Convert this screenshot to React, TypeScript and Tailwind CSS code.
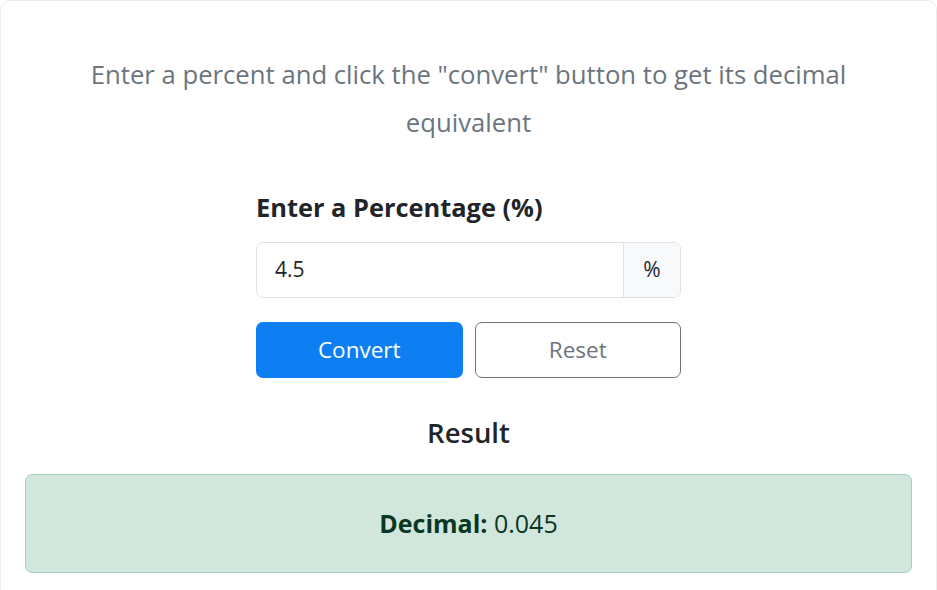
import React from "react";

export default function App() {
  return (
    <div className="w-[937px] h-[590px] bg-white overflow-hidden" style={{ fontFamily: '"Open Sans", "Noto Sans", sans-serif' }}>
      <div className="h-[610px] border border-[#ececec] rounded-[10px] px-[24px] pt-[50px]">
        <p className="text-center text-[25.7px] leading-[48px] text-[#6c757d] px-[40px]">
          Enter a percent and click the "convert" button to get its decimal equivalent
        </p>
        <div className="w-[425px] mx-auto mt-[42px]">
          <label className="block text-[25.4px] font-bold text-[#212529] leading-[36px]">Enter a Percentage (%)</label>
          <div className="mt-[17px] flex h-[56px] border border-[#dee2e6] rounded-[7px] overflow-hidden">
            <div className="flex-1 flex items-center pl-[18px] text-[21px] text-[#212529]">4.5</div>
            <div className="w-[57px] flex items-center justify-center bg-[#f8f9fa] border-l border-[#dee2e6] text-[21px] text-[#212529]">%</div>
          </div>
          <div className="mt-[24px] grid grid-cols-2 gap-[12px]">
            <button className="h-[56px] rounded-[7px] bg-[#0d7ff2] text-white text-[22.5px]">Convert</button>
            <button className="h-[56px] rounded-[7px] border border-[#6c757d] text-[#6c757d] text-[22.5px] bg-white">Reset</button>
          </div>
        </div>
        <h2 className="mt-[35px] text-center text-[27.5px] font-semibold text-[#212529] leading-[40px]">Result</h2>
        <div className="mt-[21px] h-[99px] rounded-[7px] bg-[#d1e7dd] border border-[#a3cfbb] flex items-center justify-center text-[25px] text-[#0a3622]">
          <span><b className="font-bold">Decimal:</b> 0.045</span>
        </div>
      </div>
    </div>
  );
}
